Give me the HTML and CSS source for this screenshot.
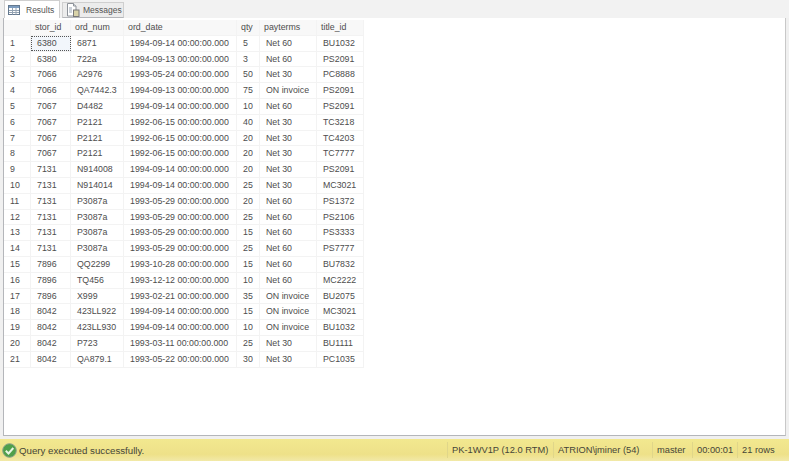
FILE: index.html
```html
<!DOCTYPE html>
<html lang="en">
<head>
<meta charset="utf-8">
<title>Results</title>
<link rel="stylesheet" href="styles.css">
</head>
<body>
<div class="app">
  <div class="tabs">
    <div class="tab tab-active">
      <svg class="tab-icon" width="12" height="10" viewBox="0 0 12 10"><rect x="0.5" y="0.5" width="11" height="9" fill="#fff" stroke="#64798f"/><rect x="1" y="1" width="10" height="2" fill="#7c9cbf"/><path d="M1 5.500h10M1 7.500h10M4.500 3v6.500M8 3v6.500" stroke="#94a3b3" stroke-width="1"/></svg>
      <span>Results</span>
    </div>
    <div class="tab tab-other">
      <svg class="tab-icon" width="14" height="14" viewBox="0 0 14 14"><path d="M1.500 0.500h6l2.500 2.500v10h-8.500z" fill="#fff" stroke="#8d9299"/><path d="M7.500 0.500v2.500h2.500" fill="#e4e8ec" stroke="#8d9299"/><rect x="7.500" y="7" width="5.500" height="6.500" fill="#d8d2a8" stroke="#777"/><path d="M3 5h3M3 7h3M3 9h3" stroke="#9aa6b5"/></svg>
      <span>Messages</span>
    </div>
  </div>
  <div class="pane">
    <div class="grid">
      <div class="row head"><div></div><div>stor_id</div><div>ord_num</div><div>ord_date</div><div>qty</div><div>payterms</div><div>title_id</div></div>
      <div class="row"><div>1</div><div class="first">6380</div><div>6871</div><div>1994-09-14 00:00:00.000</div><div>5</div><div>Net 60</div><div>BU1032</div></div>
      <div class="row"><div>2</div><div>6380</div><div>722a</div><div>1994-09-13 00:00:00.000</div><div>3</div><div>Net 60</div><div>PS2091</div></div>
      <div class="row"><div>3</div><div>7066</div><div>A2976</div><div>1993-05-24 00:00:00.000</div><div>50</div><div>Net 30</div><div>PC8888</div></div>
      <div class="row"><div>4</div><div>7066</div><div>QA7442.3</div><div>1994-09-13 00:00:00.000</div><div>75</div><div>ON invoice</div><div>PS2091</div></div>
      <div class="row"><div>5</div><div>7067</div><div>D4482</div><div>1994-09-14 00:00:00.000</div><div>10</div><div>Net 60</div><div>PS2091</div></div>
      <div class="row"><div>6</div><div>7067</div><div>P2121</div><div>1992-06-15 00:00:00.000</div><div>40</div><div>Net 30</div><div>TC3218</div></div>
      <div class="row"><div>7</div><div>7067</div><div>P2121</div><div>1992-06-15 00:00:00.000</div><div>20</div><div>Net 30</div><div>TC4203</div></div>
      <div class="row"><div>8</div><div>7067</div><div>P2121</div><div>1992-06-15 00:00:00.000</div><div>20</div><div>Net 30</div><div>TC7777</div></div>
      <div class="row"><div>9</div><div>7131</div><div>N914008</div><div>1994-09-14 00:00:00.000</div><div>20</div><div>Net 30</div><div>PS2091</div></div>
      <div class="row"><div>10</div><div>7131</div><div>N914014</div><div>1994-09-14 00:00:00.000</div><div>25</div><div>Net 30</div><div>MC3021</div></div>
      <div class="row"><div>11</div><div>7131</div><div>P3087a</div><div>1993-05-29 00:00:00.000</div><div>20</div><div>Net 60</div><div>PS1372</div></div>
      <div class="row"><div>12</div><div>7131</div><div>P3087a</div><div>1993-05-29 00:00:00.000</div><div>25</div><div>Net 60</div><div>PS2106</div></div>
      <div class="row"><div>13</div><div>7131</div><div>P3087a</div><div>1993-05-29 00:00:00.000</div><div>15</div><div>Net 60</div><div>PS3333</div></div>
      <div class="row"><div>14</div><div>7131</div><div>P3087a</div><div>1993-05-29 00:00:00.000</div><div>25</div><div>Net 60</div><div>PS7777</div></div>
      <div class="row"><div>15</div><div>7896</div><div>QQ2299</div><div>1993-10-28 00:00:00.000</div><div>15</div><div>Net 60</div><div>BU7832</div></div>
      <div class="row"><div>16</div><div>7896</div><div>TQ456</div><div>1993-12-12 00:00:00.000</div><div>10</div><div>Net 60</div><div>MC2222</div></div>
      <div class="row"><div>17</div><div>7896</div><div>X999</div><div>1993-02-21 00:00:00.000</div><div>35</div><div>ON invoice</div><div>BU2075</div></div>
      <div class="row"><div>18</div><div>8042</div><div>423LL922</div><div>1994-09-14 00:00:00.000</div><div>15</div><div>ON invoice</div><div>MC3021</div></div>
      <div class="row"><div>19</div><div>8042</div><div>423LL930</div><div>1994-09-14 00:00:00.000</div><div>10</div><div>ON invoice</div><div>BU1032</div></div>
      <div class="row"><div>20</div><div>8042</div><div>P723</div><div>1993-03-11 00:00:00.000</div><div>25</div><div>Net 30</div><div>BU1111</div></div>
      <div class="row"><div>21</div><div>8042</div><div>QA879.1</div><div>1993-05-22 00:00:00.000</div><div>30</div><div>Net 30</div><div>PC1035</div></div>
    </div>
  </div>
  <div class="status">
    <svg class="ok" width="15" height="15" viewBox="0 0 15 15"><circle cx="7.500" cy="7.500" r="6.800" fill="#4fa04a" stroke="#8aa08a"/><path d="M3.800 7.800l2.700 2.700 4.800-5.500" fill="none" stroke="#e8f5e4" stroke-width="2"/></svg>
    <span class="msg">Query executed successfully.</span>
    <div class="cell c1">PK-1WV1P (12.0 RTM)</div>
    <div class="cell c2">ATRION\jminer (54)</div>
    <div class="cell c3">master</div>
    <div class="cell c4">00:00:01</div>
    <div class="cell c5">21 rows</div>
  </div>
</div>
</body>
</html>
```

FILE: styles.css
```css
html, body { margin: 0; padding: 0; }
body { width: 789px; height: 461px; overflow: hidden; font-family: "Liberation Sans", Arial, sans-serif; font-size: 8.800px; color: #4d4d4d; background: #f0f0f0; }
.app { display: flex; flex-direction: column; height: 461px; }
.tabs { display: flex; align-items: flex-end; height: 18px; padding-left: 4px; gap: 2px; box-sizing: border-box; flex: none; background: #f2f2f2; position: relative; z-index: 1; margin-bottom: -1px; }
.tab { display: flex; align-items: center; height: 16px; box-sizing: border-box; background: #ececec; border: 1px solid #cfcfcf; border-bottom: 0; font-size: 8.500px; color: #555; }
.tab-active { width: 56px; height: 18px; background: #fff; padding-left: 3px; gap: 6px; }
.tab-other { width: 62px; padding-left: 3px; gap: 3px; border-bottom: 1px solid #b4b6ba; }
.tab-icon { flex: none; }
.pane { flex: none; height: 419px; box-sizing: border-box; margin-left: 3px; margin-right: 3px; background: #fff; border: 1px solid #b4b6ba; border-right-color: #c8c8c8; padding-top: 2px; }
.grid { width: 360px; }
.row { display: grid; grid-template-columns: 27px 40px 53px 113px 23px 57px 47px; height: 15.800px; align-items: center; box-sizing: border-box; border-bottom: 1px solid #f3f3f3; line-height: 14px; }
.row > div { padding-left: 6px; white-space: nowrap; border-right: 1px solid #f3f3f3; height: 100%; box-sizing: border-box; }
.head > div:nth-child(n+2) { padding-left: 4px; }
.head > div { background: #f8f8f8; }
.first { outline: 1px dotted #555; outline-offset: -1px; background: #f2f6fb; }
.status { flex: none; height: 22px; margin-top: 3px; display: flex; align-items: center; background: linear-gradient(#f2e88f, #eee189 70%, #f2e9a8); box-sizing: border-box; padding-left: 2px; font-size: 9.700px; color: #454538; }
.ok { flex: none; }
.msg { margin-left: 2px; flex: 1; }
.cell { box-sizing: border-box; height: 16px; line-height: 16px; white-space: nowrap; padding-left: 4px; font-size: 9.300px; border-left: 1px solid #e0d68a; }
.c1 { width: 106px; }
.c2 { width: 99px; }
.c3 { width: 40px; }
.c4 { width: 45px; }
.c5 { width: 52px; }
```
